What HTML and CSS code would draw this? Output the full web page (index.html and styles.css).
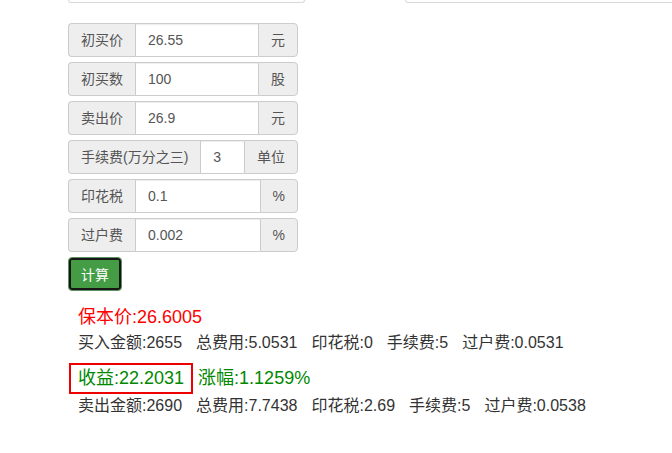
FILE: index.html
```html
<!DOCTYPE html>
<html lang="zh-CN">
<head>
<meta charset="utf-8">
<title>股票收益计算</title>
<link rel="stylesheet" href="styles.css">
</head>
<body>
<div class="top-strip">
  <div class="top-box top-left"></div>
  <div class="top-box top-right"></div>
</div>
<div class="page">
  <form class="calc">
    <div class="input-group">
      <span class="addon">初买价</span>
      <input class="field" type="text" value="26.55">
      <span class="addon addon-right">元</span>
    </div>
    <div class="input-group">
      <span class="addon">初买数</span>
      <input class="field" type="text" value="100">
      <span class="addon addon-right">股</span>
    </div>
    <div class="input-group">
      <span class="addon">卖出价</span>
      <input class="field" type="text" value="26.9">
      <span class="addon addon-right">元</span>
    </div>
    <div class="input-group">
      <span class="addon">手续费(万分之三)</span>
      <input class="field" type="text" value="3">
      <span class="addon addon-right">单位</span>
    </div>
    <div class="input-group">
      <span class="addon">印花税</span>
      <input class="field" type="text" value="0.1">
      <span class="addon addon-right">%</span>
    </div>
    <div class="input-group">
      <span class="addon">过户费</span>
      <input class="field" type="text" value="0.002">
      <span class="addon addon-right">%</span>
    </div>
    <button class="btn-calc" type="button">计算</button>
  </form>
  <div class="results">
    <div class="break-even">保本价:26.6005</div>
    <div class="detail"><span>买入金额:2655</span><span>总费用:5.0531</span><span>印花税:0</span><span>手续费:5</span><span>过户费:0.0531</span></div>
    <div class="profit-row"><span class="profit">收益:22.2031</span> <span class="rise">涨幅:1.1259%</span></div>
    <div class="detail detail-last"><span>卖出金额:2690</span><span>总费用:7.7438</span><span>印花税:2.69</span><span>手续费:5</span><span>过户费:0.0538</span></div>
  </div>
</div>
</body>
</html>
```

FILE: styles.css
```css
* { box-sizing: border-box; }
html, body { margin: 0; padding: 0; background: #fff; }
body {
  font-family: "Liberation Sans", Arial, "Noto Sans CJK SC", sans-serif;
  font-size: 14px;
  color: #333;
}
.top-strip {
  position: relative;
  height: 3px;
}
.top-box {
  position: absolute;
  top: -10px;
  height: 13px;
  border: 1px solid #d9d9d9;
  border-top: none;
  border-radius: 0 0 3px 3px;
}
.top-left { left: 68px; width: 237px; }
.top-right { left: 405px; width: 280px; }
.page {
  padding: 20px 0 0 68px;
}
.calc {
  display: flex;
  flex-direction: column;
  align-items: flex-start;
  gap: 5px;
}
.input-group {
  display: flex;
  width: 230px;
  height: 34px;
}
.addon {
  flex: none;
  display: flex;
  align-items: center;
  justify-content: center;
  padding: 0 12px;
  background: #eee;
  border: 1px solid #ccc;
  border-right: none;
  border-radius: 4px 0 0 4px;
  color: #555;
  font-size: 14px;
  line-height: 20px;
}
.addon-right {
  border-right: 1px solid #ccc;
  border-left: 1px solid #ccc;
  border-radius: 0 4px 4px 0;
}
.field {
  flex: 1 1 auto;
  min-width: 0;
  width: 10px;
  height: 34px;
  padding: 6px 12px;
  border: 1px solid #ccc;
  border-right: none;
  border-radius: 0;
  font-family: inherit;
  font-size: 14px;
  color: #555;
  background: #fff;
  outline: none;
  box-shadow: inset 0 1px 1px rgba(0,0,0,.075);
}
.btn-calc {
  height: 34px;
  padding: 0 12px;
  font-family: inherit;
  font-size: 14px;
  color: #fff;
  background: #449d44;
  border: 1px solid #5f8f5f;
  border-radius: 4px;
  box-shadow: inset 0 0 0 2px #161616;
  cursor: pointer;
}
.results {
  margin-top: 13px;
}
.break-even {
  padding-left: 10px;
  font-size: 18px;
  line-height: 26px;
  color: #f00;
}
.detail {
  padding-left: 10px;
  font-size: 16px;
  line-height: 26px;
  color: #333;
}
.detail span + span { margin-left: 14px; }
.profit-row {
  margin-top: 7px;
  margin-left: 1px;
  font-size: 18px;
  line-height: 27px;
  color: #080;
}
.profit {
  display: inline-block;
  padding: 0 7px;
  border: 2px solid #e00;
}
.rise { color: #080; }
.detail-last { line-height: 24px; }
```
